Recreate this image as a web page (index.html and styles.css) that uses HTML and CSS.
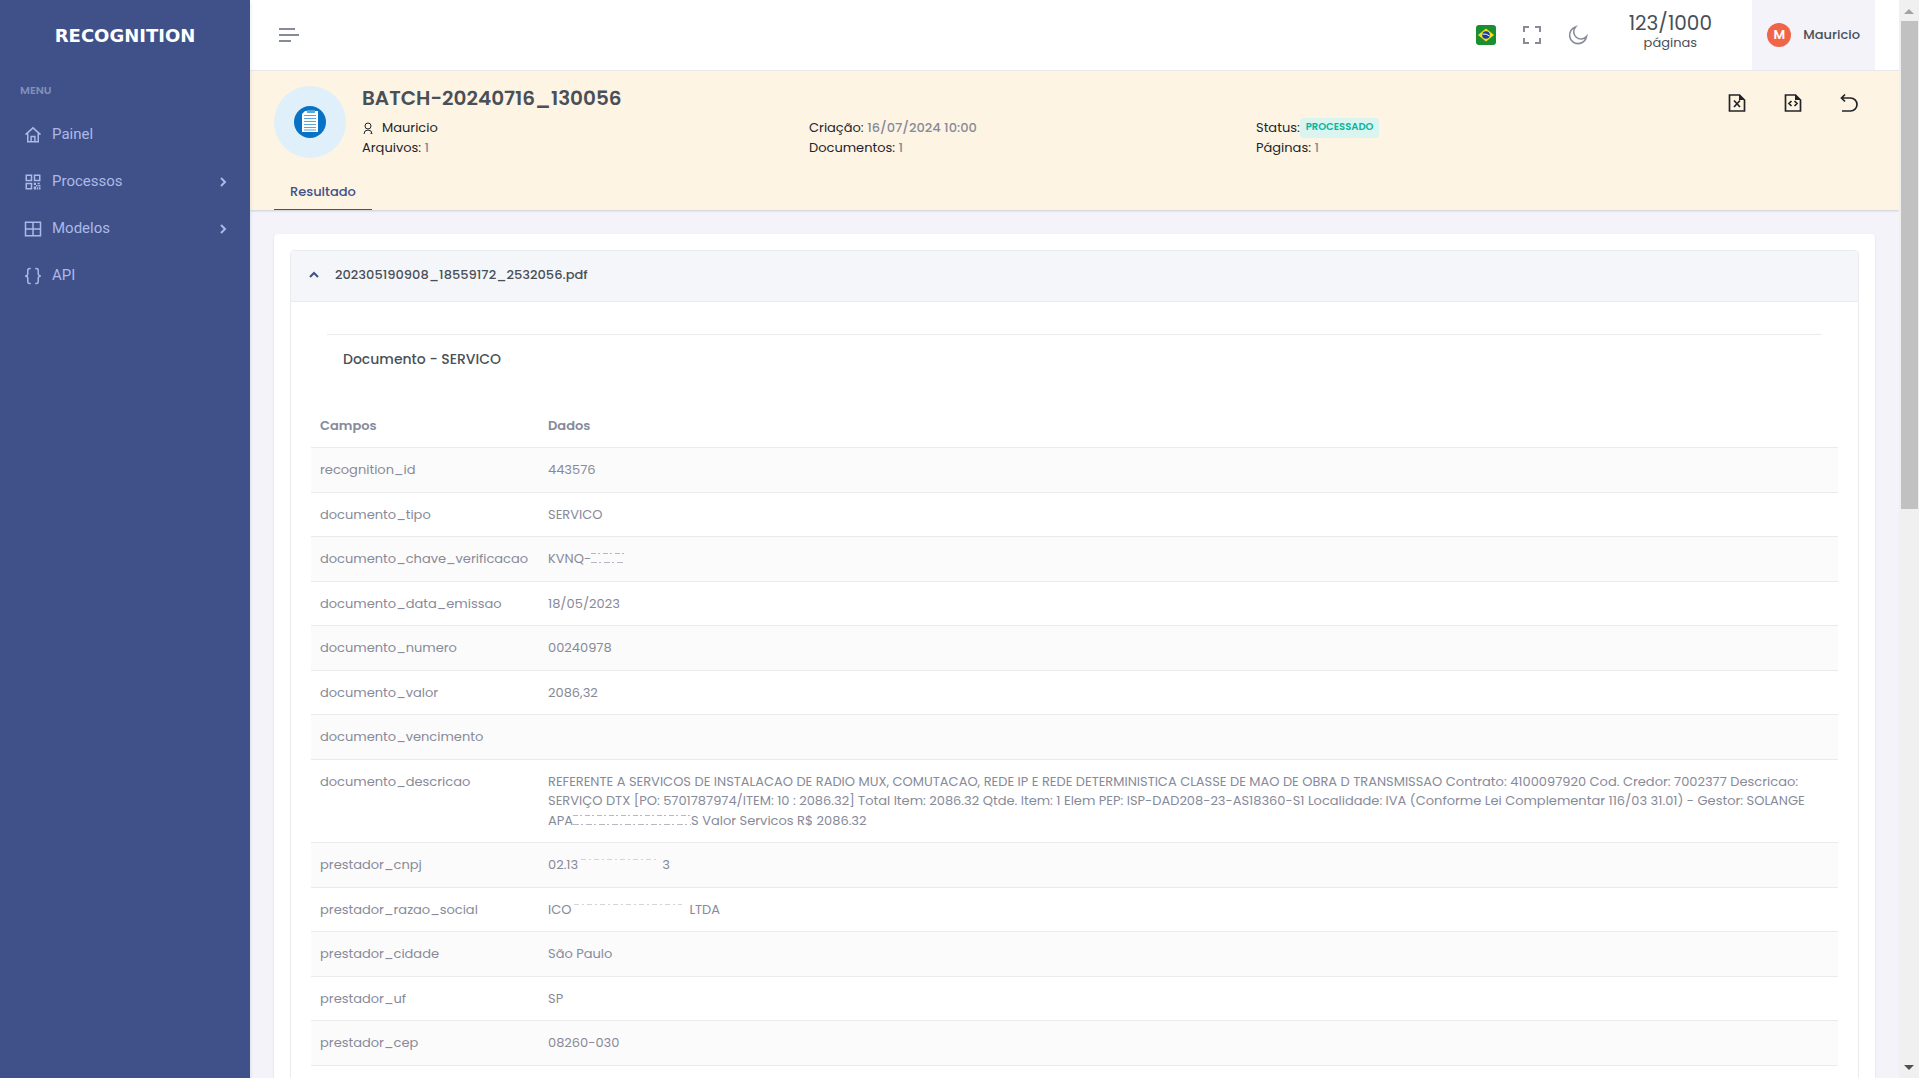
FILE: index.html
```html
<!DOCTYPE html>
<html lang="pt-BR">
<head>
<meta charset="utf-8">
<meta name="viewport" content="width=device-width, initial-scale=1">
<title>Recognition</title>
<link rel="stylesheet" href="styles.css">
</head>
<body>
<div class="app">
  <aside class="sidebar">
    <a class="brand" href="#">RECOGNITION</a>
    <div class="menu-title">MENU</div>
    <nav class="menu">
      <a href="#"><svg class="nav-icon" viewBox="0 0 24 24"><path d="M2 11.500 12 2.500l10 9M5 9.500V21h14V9.500M9.500 21v-7h5v7"/></svg>Painel</a>
      <a href="#"><svg class="nav-icon" viewBox="0 0 24 24"><path d="M3 3h7v7H3zM14 3h7v7h-7zM3 14h7v7H3z"/><path class="solid" d="M13 13h3v3h-3zM18 13h3v2h-3zM16 16h2v2h-2zM19 16h3v2h-3zM13 18h3v4h-3zM17 19h2v3h-2zM20 19h2v3h-2z"/></svg>Processos<svg class="chevron" viewBox="0 0 12 12"><path d="m4 2 4 4-4 4"/></svg></a>
      <a href="#"><svg class="nav-icon" viewBox="0 0 24 24"><path d="M2 3h20v18H2zM12 3v18M2 12h20"/></svg>Modelos<svg class="chevron" viewBox="0 0 12 12"><path d="m4 2 4 4-4 4"/></svg></a>
      <a href="#"><svg class="nav-icon" viewBox="0 0 24 24"><path d="M9 2H7.500Q5 2 5 5v4q0 3-3.500 3Q5 12 5 15v4q0 3 2.500 3H9M15 2h1.500Q19 2 19 5v4q0 3 3.500 3Q19 12 19 15v4q0 3-2.500 3H15"/></svg>API</a>
    </nav>
  </aside>

  <div class="page">
    <header class="topbar">
      <button class="icon-button" aria-label="Menu"><svg class="burger" viewBox="0 0 20 14"><path d="M0 1h16M0 7h20M0 13h12"/></svg></button>
      <div class="tools">
        <button class="icon-button" aria-label="Idioma"><svg class="flag" viewBox="0 0 20 20"><rect width="20" height="20" rx="3" fill="#198f32"/><path d="m2 10 8-6.500 8 6.500-8 6.500z" fill="#fcdc1e"/><circle cx="10" cy="10" r="3.800" fill="#173f98"/><path d="M6.500 9q4-.5 7 2" fill="none" stroke="#fff"/></svg></button>
        <button class="icon-button" aria-label="Tela cheia"><svg class="tool-icon" viewBox="0 0 20 20"><path d="M7 2H2v5M13 2h5v5M7 18H2v-5M13 18h5v-5"/></svg></button>
        <button class="icon-button" aria-label="Modo escuro"><svg class="tool-icon moon" viewBox="0 0 20 20"><path d="M7.500 2a7 7 0 0 0 11 9.500A8.500 8.500 0 1 1 7.500 2z"/></svg></button>
      </div>
      <div class="quota"><span class="quota-count">123/1000</span><span>páginas</span></div>
      <button class="user"><span class="initial">M</span>Mauricio</button>
    </header>

    <section class="batch">
      <div class="batch-main">
        <div class="avatar"><svg viewBox="0 0 32 32"><circle cx="16" cy="16" r="16" fill="#0873c4"/><path d="m11 5-3 3v18h16V5z" fill="#fff"/><path d="M13 4h8v3h-8z" fill="#5aa7dc"/><path d="M10 9.500h12M10 12.500h12M10 15.500h12M10 18.500h12M10 21.500h12M10 24h12" stroke="#5aa7dc"/></svg></div>
        <div class="batch-info">
          <h1>BATCH-20240716_130056</h1>
          <div class="facts">
            <div class="owner"><svg viewBox="0 0 12 12"><circle cx="6" cy="4" r="3"/><path d="M2 12q0-4 4-4t4 4H8"/></svg>Mauricio</div>
            <div>Criação: <span class="muted">16/07/2024 10:00</span></div>
            <div class="status">Status:<span class="badge">PROCESSADO</span></div>
            <div>Arquivos: <span class="muted">1</span></div>
            <div>Documentos: <span class="muted">1</span></div>
            <div>Páginas: <span class="muted">1</span></div>
          </div>
        </div>
        <div class="actions">
          <button class="icon-button" aria-label="Exportar Excel"><svg viewBox="0 0 20 20"><path d="M2.500 2h10l5 5v11h-15zM7 7.500l6 6.500M13 7.500 7 14"/><path class="solid" d="M12 1.500V7h6z"/></svg></button>
          <button class="icon-button" aria-label="Exportar código"><svg viewBox="0 0 20 20"><path d="M2.500 2h10l5 5v11h-15zM8.500 8 6 10.500 8.500 13M11.500 8l2.500 2.500-2.500 2.500"/><path class="solid" d="M12 1.500V7h6z"/></svg></button>
          <button class="icon-button" aria-label="Voltar"><svg viewBox="0 0 20 20"><path d="M6 1.500 2.500 5 6 8.500M3 5h8.500a6.500 6.500 0 0 1 0 13H3"/></svg></button>
        </div>
      </div>
      <nav class="tabs"><a href="#">Resultado</a></nav>
    </section>

    <main class="content">
      <div class="card">
        <section class="accordion">
          <button class="accordion-head"><svg viewBox="0 0 10 10"><path d="m1 7 4-4 4 4"/></svg>202305190908_18559172_2532056.pdf</button>
          <h2>Documento - SERVICO</h2>
          <table>
            <thead><tr><th>Campos</th><th>Dados</th></tr></thead>
            <tbody>
              <tr><td>recognition_id</td><td>443576</td></tr>
              <tr><td>documento_tipo</td><td>SERVICO</td></tr>
              <tr><td>documento_chave_verificacao</td><td>KVNQ-<span class="redacted key"></span></td></tr>
              <tr><td>documento_data_emissao</td><td>18/05/2023</td></tr>
              <tr><td>documento_numero</td><td>00240978</td></tr>
              <tr><td>documento_valor</td><td>2086,32</td></tr>
              <tr><td>documento_vencimento</td><td></td></tr>
              <tr><td>documento_descricao</td><td>REFERENTE A SERVICOS DE INSTALACAO DE RADIO MUX, COMUTACAO, REDE IP E REDE DETERMINISTICA CLASSE DE MAO DE OBRA D TRANSMISSAO Contrato: 4100097920 Cod. Credor: 7002377 Descricao: SERVIÇO DTX [PO: 5701787974/ITEM: 10 : 2086.32] Total Item: 2086.32 Qtde. Item: 1 Elem PEP: ISP-DAD208-23-AS18360-S1 Localidade: IVA (Conforme Lei Complementar 116/03 31.01) - Gestor: SOLANGE APA<span class="redacted name"></span>S Valor Servicos R$ 2086.32</td></tr>
              <tr><td>prestador_cnpj</td><td>02.13<span class="redacted top tax"></span>3</td></tr>
              <tr><td>prestador_razao_social</td><td>ICO<span class="redacted top company"></span>LTDA</td></tr>
              <tr><td>prestador_cidade</td><td>São Paulo</td></tr>
              <tr><td>prestador_uf</td><td>SP</td></tr>
              <tr><td>prestador_cep</td><td>08260-030</td></tr>
            </tbody>
          </table>
        </section>
      </div>
    </main>
  </div>

  <div class="scrollbar" aria-hidden="true">
    <svg class="up" viewBox="0 0 10 6"><path d="m5 0 5 5H0z"/></svg>
    <div class="track"><div class="thumb"></div></div>
    <svg class="down" viewBox="0 0 10 6"><path d="m5 5 5-5H0z"/></svg>
  </div>
</div>
</body>
</html>
```
FILE: styles.css
```css
* { box-sizing: border-box; }

body {
  margin: 0;
  font-family: Poppins, Inter, "Noto Sans", sans-serif;
  font-size: 13px;
  line-height: 1.5;
  color: #212529;
  background: #f3f3f9;
}

a { color: inherit; text-decoration: none; }
button { border: 0; padding: 0; background: none; font: inherit; color: inherit; cursor: pointer; }
svg { display: block; fill: none; stroke: currentColor; }
.solid { fill: currentColor; stroke: none; }

.app {
  display: grid;
  grid-template-columns: 250px minmax(0, 1fr) 20px;
  height: 100vh;
  overflow: hidden;
}

/* Sidebar */
.sidebar {
  position: relative;
  z-index: 1;
  background: #405189;
  color: #abb9e8;
  box-shadow: 0 2px 4px #0f223a1f;
}
.brand {
  display: block;
  padding: 22px 0 21px;
  text-align: center;
  font-family: "DejaVu Sans", sans-serif;
  font-size: 18px;
  font-weight: 700;
  line-height: 27px;
  color: #fff;
}
.menu-title {
  padding: 12px 20px;
  font-size: 11px;
  font-weight: 600;
  line-height: 17px;
  color: #838fb9;
}
.menu { font-family: "HKGrotesk", Roboto, sans-serif; font-size: 15px; }
.menu a { display: flex; align-items: center; height: 47px; padding: 0 21px 0 24px; }
.nav-icon { width: 18px; height: 18px; margin-right: 10px; stroke-width: 2; }
.chevron { width: 12px; height: 12px; margin-left: auto; stroke-width: 2; }

/* Top bar */
.page { display: flex; flex-direction: column; overflow: hidden; }
.page > * { flex-shrink: 0; }
.topbar {
  display: flex;
  align-items: center;
  height: 71px;
  padding: 0 24px 0 29px;
  background: #fff;
  border-bottom: 1px solid #e9ebec;
  color: #878a99;
}
.burger { width: 20px; height: 14px; stroke-width: 2; }
.tools { display: flex; gap: 26px; margin-left: auto; }
.flag, .tool-icon { width: 20px; height: 20px; }
.flag { stroke: none; }
.tool-icon { stroke-width: 2; }
.moon { stroke-width: 1.600; }
.quota {
  display: flex;
  flex-direction: column;
  align-items: center;
  width: 164px;
  padding-bottom: 6px;
  color: #495057;
  line-height: 17px;
}
.quota-count { font-size: 20px; line-height: 21px; }
.user {
  display: flex;
  align-items: center;
  gap: 12px;
  height: 70px;
  padding: 0 15px;
  background: #f3f3f9;
  color: #495057;
  font-weight: 500;
}
.initial {
  width: 24px;
  border-radius: 50%;
  background: #f06548;
  color: #fff;
  font-weight: 600;
  line-height: 24px;
  text-align: center;
}

/* Batch summary */
.batch { padding: 15px 24px 0; background: #fef4e4; box-shadow: 0 1px 2px #38414a33; }
.batch-main { display: flex; gap: 16px; height: 85px; }
.avatar {
  display: grid;
  place-items: center;
  width: 72px;
  height: 72px;
  border-radius: 50%;
  background: #dff0fa;
}
.avatar svg { width: 32px; height: 32px; stroke: none; }
.batch-info { flex: 1; }
h1 { margin: 0 0 8px; font-size: 20px; line-height: 24px; font-weight: 600; color: #495057; }
.facts { display: grid; grid-template-columns: repeat(3, 1fr); line-height: 20px; }
.muted { color: #878a99; font-weight: 500; }
.owner { display: flex; align-items: center; gap: 8px; }
.owner svg { width: 12px; height: 12px; }
.status { display: flex; }
.badge {
  padding: 0 6px;
  border-radius: 4px;
  background: #daf4f0;
  color: #0ab39c;
  font-size: 10px;
  font-weight: 600;
  line-height: 18px;
}
.actions { display: flex; align-items: flex-start; gap: 36px; width: 156px; padding: 7px 0 0 8px; }
.actions svg { width: 20px; height: 20px; stroke-width: 1.700; }
.tabs { display: flex; }
.tabs a {
  height: 39px;
  padding: 11px 16px 7px;
  border-bottom: 1px solid #405189;
  color: #405189;
  font-weight: 500;
  line-height: 20px;
}

/* Results */
.content { padding: 24px; }
.card { padding: 16px; background: #fff; border-radius: 4px; box-shadow: 0 1px 2px #38414a26; }
.accordion { padding-bottom: 60px; border: 1px solid #e9ebec; border-radius: 4px; }
.accordion-head {
  display: flex;
  align-items: center;
  gap: 16px;
  width: 100%;
  height: 51px;
  padding: 0 18px 2px;
  background: #f5f6fa;
  border-bottom: 1px solid #e9ebec;
  color: #495057;
  font-weight: 500;
}
.accordion-head svg { width: 10px; height: 10px; stroke: #405189; stroke-width: 2; }
h2 {
  margin: 32px 36px 0;
  padding: 14px 16px 33px;
  border-top: 1px solid #e9ebec;
  font-size: 14px;
  line-height: 21px;
  font-weight: 500;
  color: #495057;
}
table { width: calc(100% - 40px); margin: 0 20px; border-collapse: separate; border-spacing: 0; color: #878a99; }
th, td { padding: 12px 9px; border-bottom: 1px solid #e9ebec; text-align: left; vertical-align: top; }
th { height: 45px; font-weight: 600; vertical-align: bottom; }
th:first-child { width: 228px; }
tbody tr:nth-child(odd) { background: #fbfbfb; }

/* Masked values: only broken edges of the characters remain */
.redacted {
  display: inline-block;
  height: 10px;
  background:
    repeating-linear-gradient(90deg, #b5b7c1 0 5px, transparent 5px 7px, #b5b7c1 7px 9px, transparent 9px 12px) top / 100% 1px no-repeat,
    repeating-linear-gradient(90deg, #b5b7c1 0 6px, transparent 6px 8px, #b5b7c1 8px 10px, transparent 10px 13px) bottom / 100% 1px no-repeat;
}
.redacted.top {
  background: repeating-linear-gradient(90deg, transparent 0 3px, #d3d4da 3px 8px, transparent 8px 11px, #d3d4da 11px 13px) top left / 94% 1px no-repeat;
}
.redacted.key { width: 33px; }
.redacted.name { width: 118px; }
.redacted.tax { width: 84px; }
.redacted.company { width: 118px; }

/* Scrollbar */
.scrollbar {
  display: flex;
  flex-direction: column;
  align-items: center;
  padding: 9px 0 7px;
  background: #f0f0f0;
}
.scrollbar svg { width: 10px; height: 6px; stroke: none; }
.up { fill: #a3a3a3; }
.down { fill: #505050; }
.track { flex: 1; width: 17px; padding: 6px 0; }
.thumb { height: 47%; background: #c1c1c1; }
```
